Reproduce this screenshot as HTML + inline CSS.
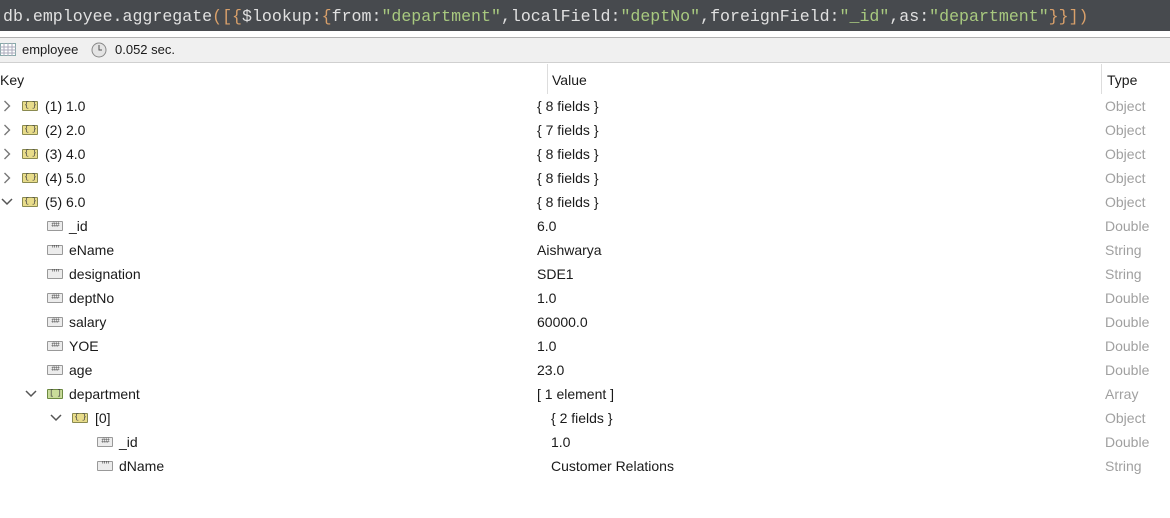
<!DOCTYPE html><html><head><style>
body{margin:0;width:1170px;height:518px;background:#fff;font-family:"Liberation Sans",sans-serif;font-size:14px;color:#1a1a1a;position:relative;overflow:hidden}
.code{position:absolute;left:0;top:0;width:1170px;height:31px;background:#474a4e;font-family:"Liberation Mono",monospace;font-size:16.6px;line-height:34px;color:#e0e0e0;white-space:pre;padding-left:3px;box-sizing:border-box}
.p{color:#d9a06a}.s{color:#a8c97f}
.tb{position:absolute;left:0;top:37px;width:1170px;height:26px;background:#f0f0f0;border-top:1px solid #b0b0b0;border-bottom:1px solid #d0d0d0;box-sizing:border-box}
.r{position:absolute;height:24px;line-height:24px;white-space:nowrap}
.t{color:#a0a0a0}
.ic{position:absolute;width:14px;height:8px;border:1px solid #8a8a50;background:#e8dc8a;border-radius:1px;font-size:8px;line-height:8px;text-align:center;color:#444;font-family:"Liberation Mono",monospace;letter-spacing:-1px}
.ia{background:#c9dc9a;border-color:#6c8a40}
.ig{background:#ececec;border-color:#999;color:#555}
</style></head><body>
<div class="code">db.employee.aggregate<span class="p">([{</span>$lookup:<span class="p">{</span>from:<span class="s">"department"</span>,localField:<span class="s">"deptNo"</span>,foreignField:<span class="s">"_id"</span>,as:<span class="s">"department"</span><span class="p">}}])</span></div>
<div class="tb">
<svg style="position:absolute;left:0;top:5px" width="16" height="14"><rect x="0.5" y="0.5" width="15" height="12" fill="#fff" stroke="#8aa"/><path d="M0 4h16M0 7h16M0 10h16M4 0v13M8 0v13M12 0v13" stroke="#aab" stroke-width="1"/></svg>
<span style="position:absolute;left:22px;top:4px;font-size:13px">employee</span>
<svg style="position:absolute;left:91px;top:4px" width="16" height="16"><circle cx="8" cy="8" r="7" fill="#e4e4e4" stroke="#888"/><path d="M8 3v5h3" stroke="#555" fill="none"/></svg>
<span style="position:absolute;left:115px;top:4px;font-size:13px">0.052 sec.</span>
</div>
<div style="position:absolute;left:547px;top:64px;width:1px;height:30px;background:#ddd"></div>
<div style="position:absolute;left:1101px;top:64px;width:1px;height:30px;background:#ddd"></div>
<div class="r" style="left:0;top:68px">Key</div>
<div class="r" style="left:552px;top:68px">Value</div>
<div class="r" style="left:1107px;top:68px">Type</div>

<svg style="position:absolute;left:3px;top:100px" width="8" height="12"><path d="M1.5 1l5 5-5 5" stroke="#777" fill="none" stroke-width="1.4"/></svg>
<svg style="position:absolute;left:3px;top:124px" width="8" height="12"><path d="M1.5 1l5 5-5 5" stroke="#777" fill="none" stroke-width="1.4"/></svg>
<svg style="position:absolute;left:3px;top:148px" width="8" height="12"><path d="M1.5 1l5 5-5 5" stroke="#777" fill="none" stroke-width="1.4"/></svg>
<svg style="position:absolute;left:3px;top:172px" width="8" height="12"><path d="M1.5 1l5 5-5 5" stroke="#777" fill="none" stroke-width="1.4"/></svg>
<svg style="position:absolute;left:1px;top:198px" width="12" height="8"><path d="M1 1l5 5 5-5" stroke="#555" fill="none" stroke-width="1.5"/></svg>
<svg style="position:absolute;left:25px;top:390px" width="12" height="8"><path d="M1 1l5 5 5-5" stroke="#555" fill="none" stroke-width="1.5"/></svg>
<svg style="position:absolute;left:50px;top:414px" width="12" height="8"><path d="M1 1l5 5 5-5" stroke="#555" fill="none" stroke-width="1.5"/></svg>

<div class="ic" style="left:22px;top:101px">{ }</div><div class="r" style="left:45px;top:94px">(1) 1.0</div><div class="r" style="left:537px;top:94px">{ 8 fields }</div><div class="r t" style="left:1105px;top:94px">Object</div>
<div class="ic" style="left:22px;top:125px">{ }</div><div class="r" style="left:45px;top:118px">(2) 2.0</div><div class="r" style="left:537px;top:118px">{ 7 fields }</div><div class="r t" style="left:1105px;top:118px">Object</div>
<div class="ic" style="left:22px;top:149px">{ }</div><div class="r" style="left:45px;top:142px">(3) 4.0</div><div class="r" style="left:537px;top:142px">{ 8 fields }</div><div class="r t" style="left:1105px;top:142px">Object</div>
<div class="ic" style="left:22px;top:173px">{ }</div><div class="r" style="left:45px;top:166px">(4) 5.0</div><div class="r" style="left:537px;top:166px">{ 8 fields }</div><div class="r t" style="left:1105px;top:166px">Object</div>
<div class="ic" style="left:22px;top:197px">{ }</div><div class="r" style="left:45px;top:190px">(5) 6.0</div><div class="r" style="left:537px;top:190px">{ 8 fields }</div><div class="r t" style="left:1105px;top:190px">Object</div>

<div class="ic ig" style="left:47px;top:221px">##</div><div class="r" style="left:69px;top:214px">_id</div><div class="r" style="left:537px;top:214px">6.0</div><div class="r t" style="left:1105px;top:214px">Double</div>
<div class="ic ig" style="left:47px;top:245px">""</div><div class="r" style="left:69px;top:238px">eName</div><div class="r" style="left:537px;top:238px">Aishwarya</div><div class="r t" style="left:1105px;top:238px">String</div>
<div class="ic ig" style="left:47px;top:269px">""</div><div class="r" style="left:69px;top:262px">designation</div><div class="r" style="left:537px;top:262px">SDE1</div><div class="r t" style="left:1105px;top:262px">String</div>
<div class="ic ig" style="left:47px;top:293px">##</div><div class="r" style="left:69px;top:286px">deptNo</div><div class="r" style="left:537px;top:286px">1.0</div><div class="r t" style="left:1105px;top:286px">Double</div>
<div class="ic ig" style="left:47px;top:317px">##</div><div class="r" style="left:69px;top:310px">salary</div><div class="r" style="left:537px;top:310px">60000.0</div><div class="r t" style="left:1105px;top:310px">Double</div>
<div class="ic ig" style="left:47px;top:341px">##</div><div class="r" style="left:69px;top:334px">YOE</div><div class="r" style="left:537px;top:334px">1.0</div><div class="r t" style="left:1105px;top:334px">Double</div>
<div class="ic ig" style="left:47px;top:365px">##</div><div class="r" style="left:69px;top:358px">age</div><div class="r" style="left:537px;top:358px">23.0</div><div class="r t" style="left:1105px;top:358px">Double</div>
<div class="ic ia" style="left:47px;top:389px">[ ]</div><div class="r" style="left:69px;top:382px">department</div><div class="r" style="left:537px;top:382px">[ 1 element ]</div><div class="r t" style="left:1105px;top:382px">Array</div>
<div class="ic" style="left:72px;top:413px">{ }</div><div class="r" style="left:95px;top:406px">[0]</div><div class="r" style="left:551px;top:406px">{ 2 fields }</div><div class="r t" style="left:1105px;top:406px">Object</div>
<div class="ic ig" style="left:97px;top:437px">##</div><div class="r" style="left:119px;top:430px">_id</div><div class="r" style="left:551px;top:430px">1.0</div><div class="r t" style="left:1105px;top:430px">Double</div>
<div class="ic ig" style="left:97px;top:461px">""</div><div class="r" style="left:119px;top:454px">dName</div><div class="r" style="left:551px;top:454px">Customer Relations</div><div class="r t" style="left:1105px;top:454px">String</div>
</body></html>
